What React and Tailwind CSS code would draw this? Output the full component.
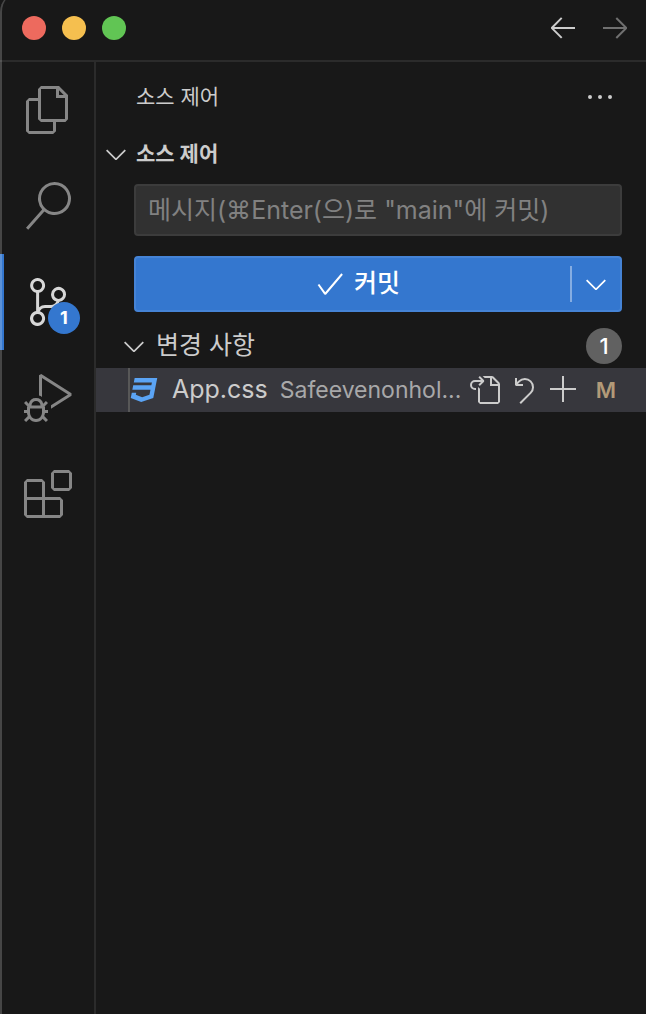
import {
  VscAdd,
  VscArrowLeft,
  VscArrowRight,
  VscCheck,
  VscChevronDown,
  VscDebugAlt,
  VscDiscard,
  VscEllipsis,
  VscExtensions,
  VscFiles,
  VscGoToFile,
  VscSearch,
  VscSourceControl,
} from "react-icons/vsc";

const ACTIVITIES = [
  { id: "explorer",   label: "탐색기",      icon: VscFiles },
  { id: "search",     label: "검색",        icon: VscSearch },
  { id: "scm",        label: "소스 제어",   icon: VscSourceControl, badge: 1 },
  { id: "debug",      label: "실행 및 디버그", icon: VscDebugAlt },
  { id: "extensions", label: "확장",        icon: VscExtensions },
];

const FILE_ACTIONS = [
  { label: "파일 열기",      icon: VscGoToFile },
  { label: "변경 내용 취소", icon: VscDiscard },
  { label: "변경 내용 스테이징", icon: VscAdd },
];

function CssIcon() {
  return (
    <svg viewBox="0 0 24 24" className="size-8 shrink-0 fill-[#5ba4f5]" aria-hidden="true">
      <path d="M5 3l-.65 3.34h13.59L17.5 8.5H3.92l-.66 3.33h13.59l-.76 3.81-5.48 1.81-4.75-1.81.33-1.64H2.85l-.79 4 7.85 3 9.05-3 1.2-6.03.24-1.21L21.94 3H5z" />
    </svg>
  );
}

function TitleBar() {
  return (
    <header className="flex h-[62px] shrink-0 items-center justify-between border-b-2 border-[#2b2b2b] pr-[15px] pb-1 pl-[22px]">
      <div className="flex gap-4">
        <button aria-label="닫기" className="size-6 rounded-full bg-[#ed6a5e]" />
        <button aria-label="최소화" className="size-6 rounded-full bg-[#f5bf4f]" />
        <button aria-label="확대" className="size-6 rounded-full bg-[#61c554]" />
      </div>
      <div className="flex gap-5 pb-0.5">
        <button aria-label="뒤로" className="text-[#cccccc]"><VscArrowLeft className="size-8" /></button>
        <button aria-label="앞으로" className="text-[#707070]"><VscArrowRight className="size-8" /></button>
      </div>
    </header>
  );
}

function ActivityBar({ active }) {
  return (
    <nav className="flex w-24 shrink-0 flex-col border-r-2 border-[#2b2b2b]">
      {ACTIVITIES.map(({ id, label, icon: Icon, badge }) => (
        <button
          key={id}
          aria-label={label}
          className={`relative flex h-24 items-center justify-center border-l-4 pr-0.5 ${
            id === active ? "border-[#3477cf] text-[#d7d7d7]" : "border-transparent text-[#868686]"
          }`}
        >
          <Icon className="size-12" />
          {badge && (
            <span className="absolute right-[14px] bottom-4 flex size-8 items-center justify-center rounded-full bg-[#3477cf] text-lg font-bold text-white">
              {badge}
            </span>
          )}
        </button>
      ))}
    </nav>
  );
}

function CommitBox() {
  return (
    <div className="flex flex-col gap-5 pt-2 pr-6 pb-3 pl-[38px]">
      <input
        aria-label="커밋 메시지"
        placeholder={'메시지(⌘Enter(으)로 "main"에 커밋)'}
        className="h-[52px] w-full rounded-sm border-2 border-[#3c3c3c] bg-[#313131] px-3 text-[25px] text-[#cccccc] outline-none placeholder:text-[#818181]"
      />
      <div className="flex h-14 items-center rounded-sm border-2 border-[#4583d5] bg-[#3477cf] text-white">
        <button className="flex h-full flex-1 items-center justify-center gap-2 pl-2 text-[25px] font-medium">
          <VscCheck className="size-8" />
          커밋
        </button>
        <span className="h-9 w-0.5 bg-white/40" />
        <button aria-label="추가 작업" className="flex h-full w-12 items-center justify-center">
          <VscChevronDown className="size-8" />
        </button>
      </div>
    </div>
  );
}

function ChangedFile({ name, folder, status }) {
  return (
    <div className="flex h-11 items-center bg-[#37373d] pr-[30px] pl-8">
      <span className="-mr-0.5 h-full w-0.5 shrink-0 bg-[#585858]" />
      <CssIcon />
      <a href="#" className="ml-3 shrink-0 text-[25px] text-[#cccccc]">{name}</a>
      <span className="ml-3 min-w-0 flex-1 whitespace-nowrap text-[23px] text-[#a8a8a9]">{folder}</span>
      <div className="flex shrink-0 gap-2 text-[#cccccc]">
        {FILE_ACTIONS.map(({ label, icon: Icon }) => (
          <button key={label} aria-label={label}><Icon className="size-8" /></button>
        ))}
      </div>
      <span className="ml-4 shrink-0 text-[22px] font-semibold text-[#b29a78]">{status}</span>
    </div>
  );
}

export default function App() {
  return (
    <div className="relative flex min-h-screen flex-col overflow-hidden bg-[#181818] font-[Inter,'Noto_Sans_CJK_KR',sans-serif] text-[#cccccc]">
      <TitleBar />
      <div className="flex flex-1">
        <ActivityBar active="scm" />
        <main className="min-w-0 flex-1">
          <div className="flex h-[70px] items-center justify-between pr-[30px] pl-10">
            <h1 className="text-[21px]">소스 제어</h1>
            <button aria-label="기타 작업"><VscEllipsis className="size-8" /></button>
          </div>

          <button className="flex h-11 w-full items-center gap-1 pl-1 text-[21px] font-bold">
            <VscChevronDown className="size-8" />
            소스 제어
          </button>
          <CommitBox />

          <div className="flex h-11 items-center pr-6 pl-[22px]">
            <button className="flex flex-1 items-center gap-1.5 text-[25px]">
              <VscChevronDown className="size-8" />
              변경 사항
            </button>
            <span className="flex size-9 items-center justify-center rounded-full bg-[#616161] text-[22px] font-medium text-white">1</span>
          </div>
          <ChangedFile name="App.css" folder="Safeevenonhol..." status="M" />
        </main>
      </div>

      {/* window edge */}
      <div className="pointer-events-none absolute -top-2 bottom-0 left-0 w-5 rounded-tl-[20px] border-l-2 border-white/20" />
    </div>
  );
}
